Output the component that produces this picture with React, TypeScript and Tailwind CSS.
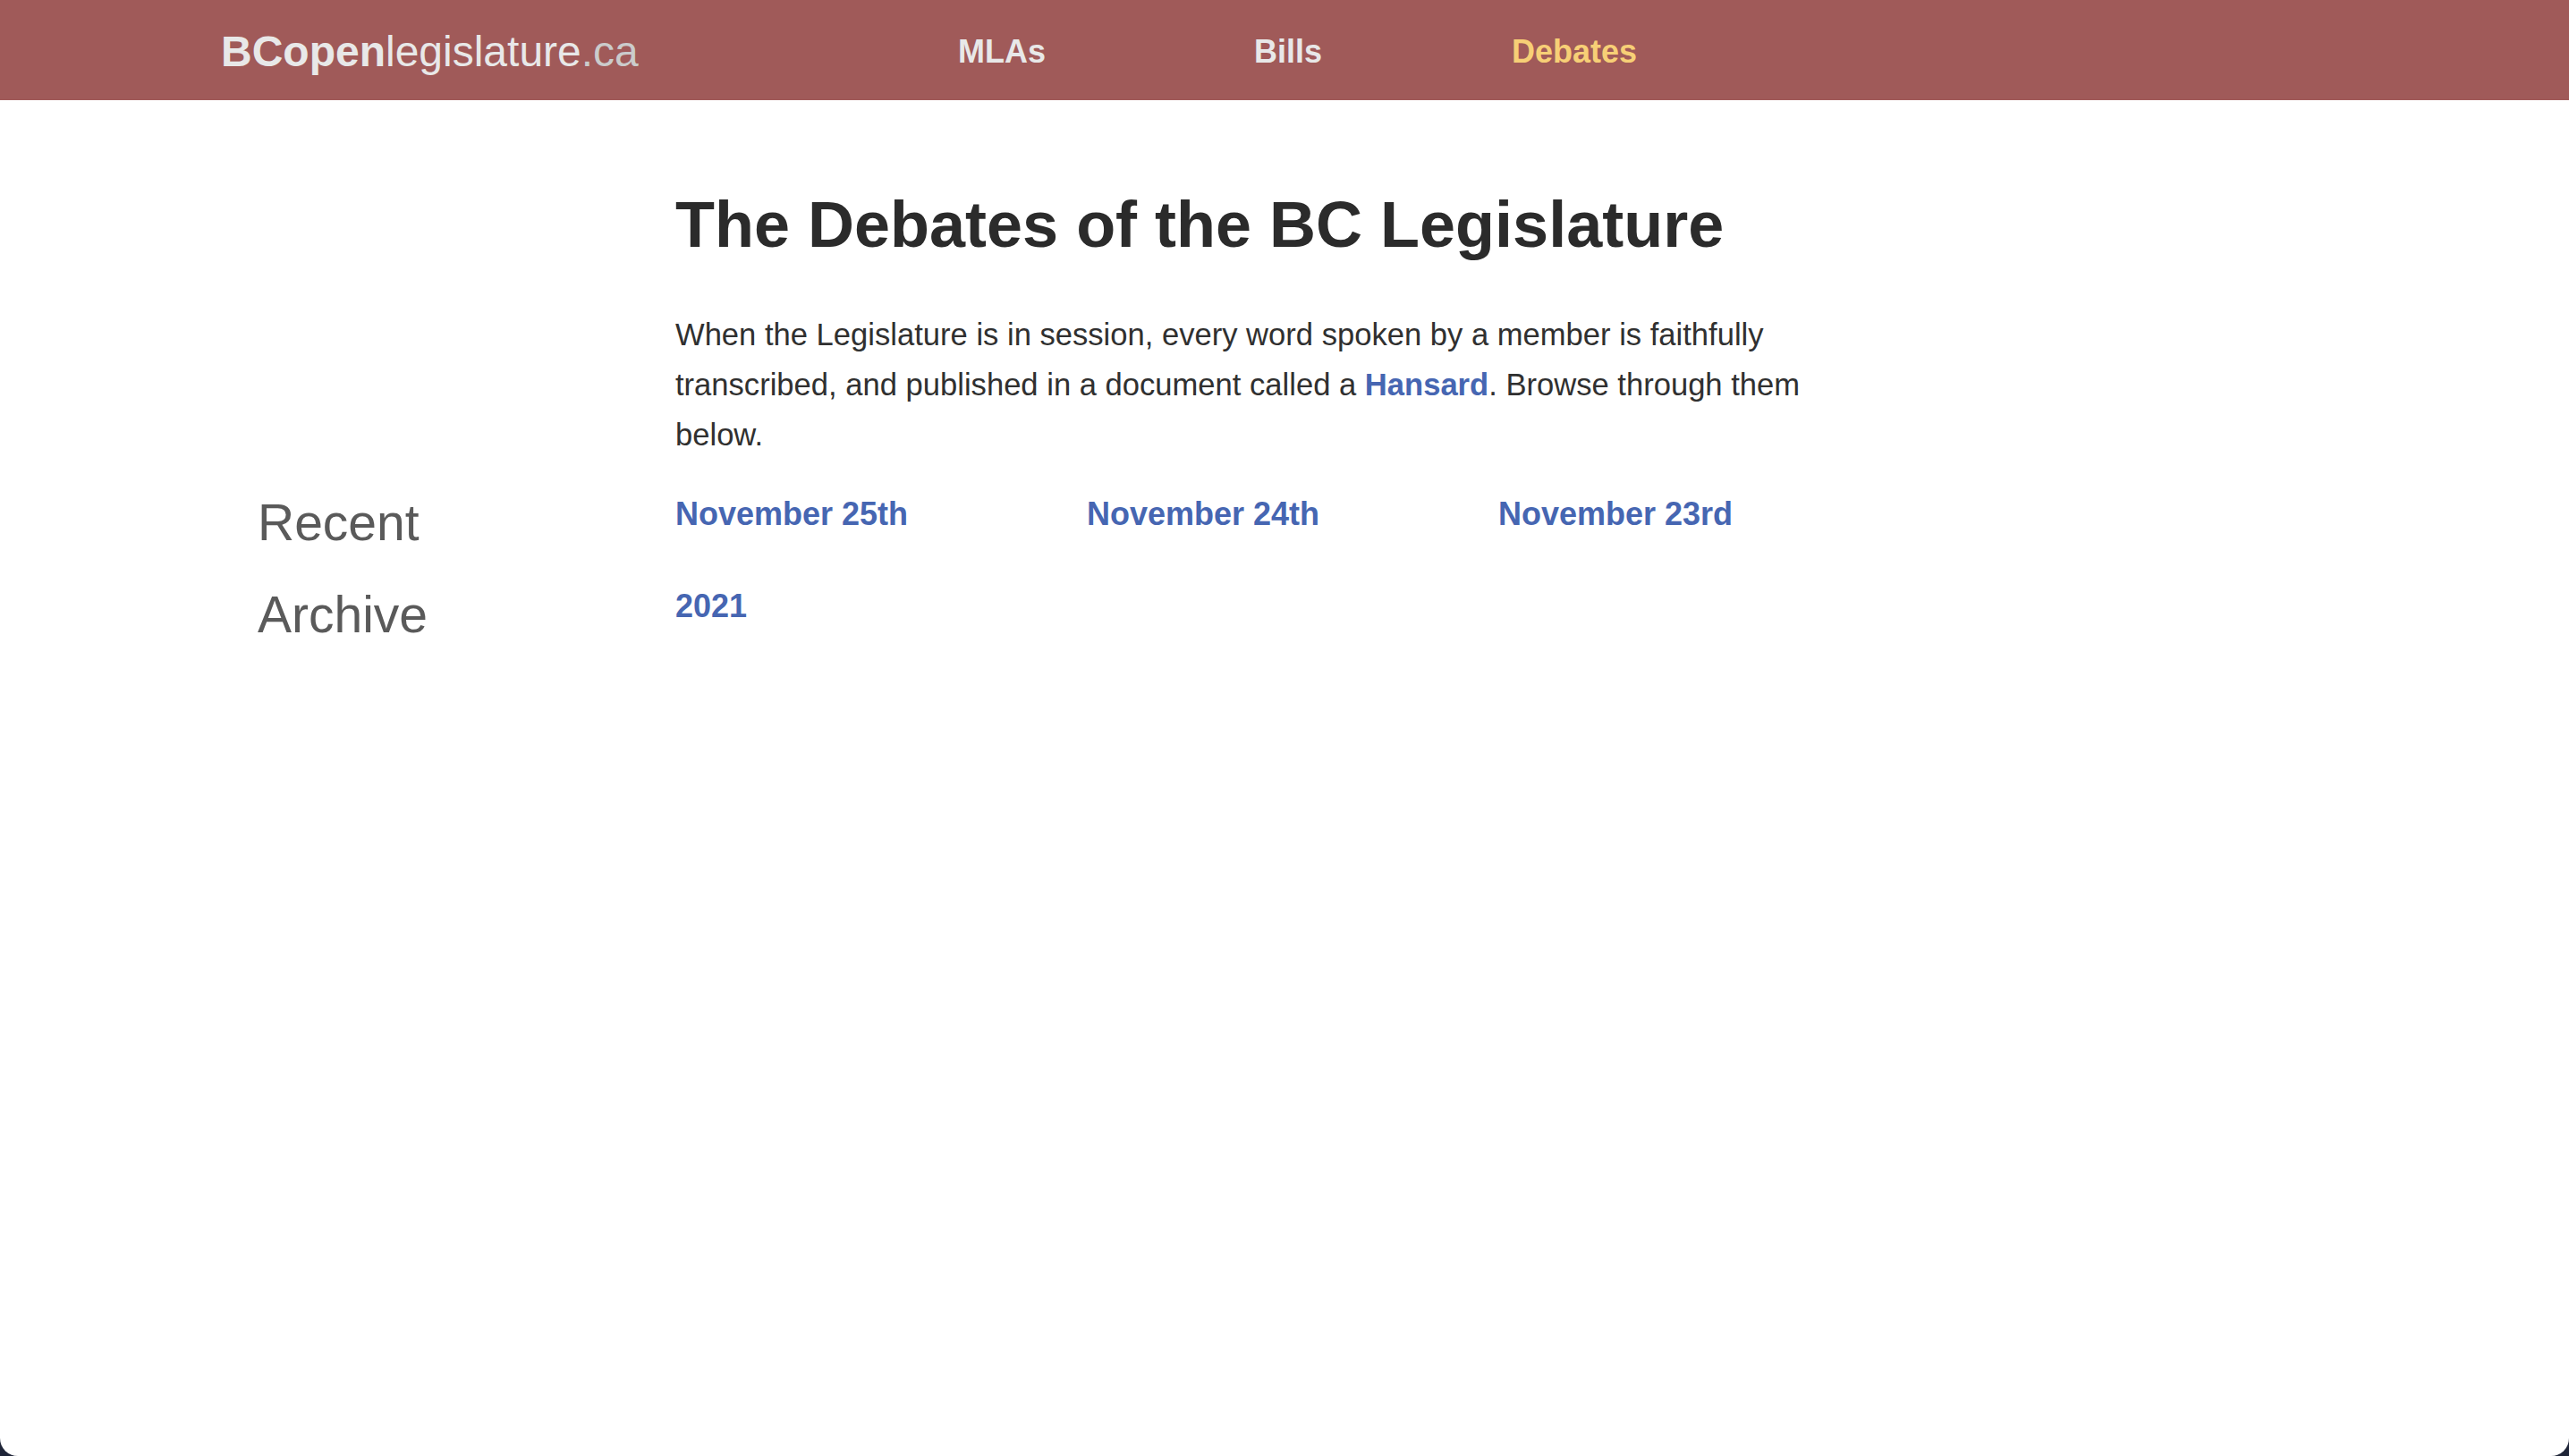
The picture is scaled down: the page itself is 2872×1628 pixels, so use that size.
const recent = ['November 25th', 'November 24th', 'November 23rd'];
const archive = ['2021'];

const navItems = [
  { label: 'MLAs', active: false },
  { label: 'Bills', active: false },
  { label: 'Debates', active: true },
];

const App = () => {
  return (
    <div className="min-h-screen bg-[#1f2538] font-['Liberation_Sans',Arial,sans-serif]">
      <div className="h-[1628px] bg-white rounded-b-[20px] overflow-hidden">
        {/* header */}
        <header className="h-[112px] bg-[#a05a59] flex items-center pl-[247px] pt-[3px]">
          <a href="#" className="w-[713px] text-[48px] text-[#e8e8e8]">
            <span className="font-bold">BCopen</span>
            <span>legislature</span>
            <span className="text-[#cbcbcb]">.ca</span>
          </a>
          <nav className="flex">
            {navItems.map((item) => (
              <a
                key={item.label}
                href="#"
                className={`w-[320px] text-center text-[36px] font-bold ${item.active ? 'text-[#f7cf76]' : 'text-[#e8e8e8]'}`}
              >
                {item.label}
              </a>
            ))}
          </nav>
        </header>

        <main className="pl-[288px]">
          <div className="pl-[467px]">
            <h1 className="mt-[99px] text-[72px] leading-[80px] font-bold text-[#2b2b2b]">
              The Debates of the BC Legislature
            </h1>
            <p className="mt-[55px] w-[1330px] text-[34.6px] leading-[56px] text-[#303030]">
              When the Legislature is in session, every word spoken by a member is faithfully transcribed, and
              published in a document called a <a href="#" className="font-bold text-[#4666b2]">Hansard</a>.
              Browse through them below.
            </p>
          </div>

          <div className="mt-[38px] flex flex-col gap-[39px]">
            <div className="grid grid-cols-[467px_460px_460px_460px] items-start">
              <h2 className="text-[57px] leading-[64px] text-[#5a5a5a]">Recent</h2>
              {recent.map((d) => (
                <a key={d} href="#" className="text-[36px] leading-[45px] font-bold text-[#4666b2]">
                  {d}
                </a>
              ))}
            </div>
            <div className="grid grid-cols-[467px_460px_460px_460px] items-start">
              <h2 className="text-[57px] leading-[64px] text-[#5a5a5a]">Archive</h2>
              {archive.map((y) => (
                <a key={y} href="#" className="text-[36px] leading-[45px] font-bold text-[#4666b2]">
                  {y}
                </a>
              ))}
            </div>
          </div>
        </main>
      </div>
    </div>
  );
};

export default App;
